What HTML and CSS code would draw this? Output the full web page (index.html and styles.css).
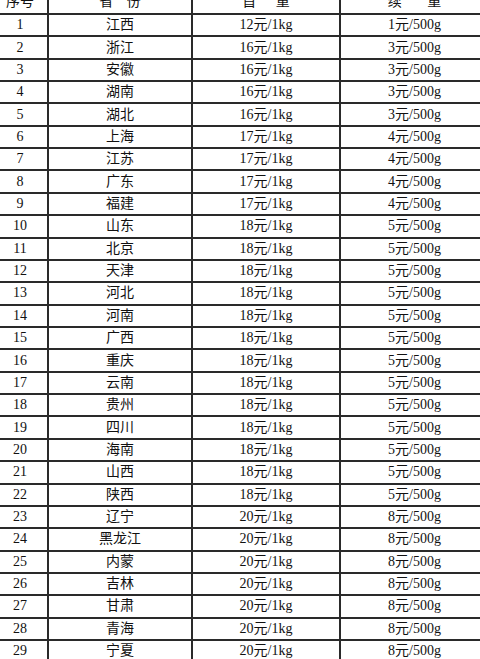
FILE: index.html
```html
<!DOCTYPE html>
<html lang="zh-CN">
<head>
<meta charset="utf-8">
<title>运费表</title>
<link rel="stylesheet" href="styles.css">
</head>
<body>
<table class="rates">
<colgroup><col class="c-no"><col class="c-prov"><col class="c-first"><col class="c-next"></colgroup>
<thead>
<tr><th>序号</th><th class="sp1">省 份</th><th class="sp2">首 重</th><th class="sp3">续 重</th></tr>
</thead>
<tbody>
<tr><td>1</td><td>江西</td><td>12元/1kg</td><td>1元/500g</td></tr>
<tr><td>2</td><td>浙江</td><td>16元/1kg</td><td>3元/500g</td></tr>
<tr><td>3</td><td>安徽</td><td>16元/1kg</td><td>3元/500g</td></tr>
<tr><td>4</td><td>湖南</td><td>16元/1kg</td><td>3元/500g</td></tr>
<tr><td>5</td><td>湖北</td><td>16元/1kg</td><td>3元/500g</td></tr>
<tr><td>6</td><td>上海</td><td>17元/1kg</td><td>4元/500g</td></tr>
<tr><td>7</td><td>江苏</td><td>17元/1kg</td><td>4元/500g</td></tr>
<tr><td>8</td><td>广东</td><td>17元/1kg</td><td>4元/500g</td></tr>
<tr><td>9</td><td>福建</td><td>17元/1kg</td><td>4元/500g</td></tr>
<tr><td>10</td><td>山东</td><td>18元/1kg</td><td>5元/500g</td></tr>
<tr><td>11</td><td>北京</td><td>18元/1kg</td><td>5元/500g</td></tr>
<tr><td>12</td><td>天津</td><td>18元/1kg</td><td>5元/500g</td></tr>
<tr><td>13</td><td>河北</td><td>18元/1kg</td><td>5元/500g</td></tr>
<tr><td>14</td><td>河南</td><td>18元/1kg</td><td>5元/500g</td></tr>
<tr><td>15</td><td>广西</td><td>18元/1kg</td><td>5元/500g</td></tr>
<tr><td>16</td><td>重庆</td><td>18元/1kg</td><td>5元/500g</td></tr>
<tr><td>17</td><td>云南</td><td>18元/1kg</td><td>5元/500g</td></tr>
<tr><td>18</td><td>贵州</td><td>18元/1kg</td><td>5元/500g</td></tr>
<tr><td>19</td><td>四川</td><td>18元/1kg</td><td>5元/500g</td></tr>
<tr><td>20</td><td>海南</td><td>18元/1kg</td><td>5元/500g</td></tr>
<tr><td>21</td><td>山西</td><td>18元/1kg</td><td>5元/500g</td></tr>
<tr><td>22</td><td>陕西</td><td>18元/1kg</td><td>5元/500g</td></tr>
<tr><td>23</td><td>辽宁</td><td>20元/1kg</td><td>8元/500g</td></tr>
<tr><td>24</td><td>黑龙江</td><td>20元/1kg</td><td>8元/500g</td></tr>
<tr><td>25</td><td>内蒙</td><td>20元/1kg</td><td>8元/500g</td></tr>
<tr><td>26</td><td>吉林</td><td>20元/1kg</td><td>8元/500g</td></tr>
<tr><td>27</td><td>甘肃</td><td>20元/1kg</td><td>8元/500g</td></tr>
<tr><td>28</td><td>青海</td><td>20元/1kg</td><td>8元/500g</td></tr>
<tr><td>29</td><td>宁夏</td><td>20元/1kg</td><td>8元/500g</td></tr>
</tbody>
</table>
</body>
</html>
```

FILE: styles.css
```css
html, body {
  margin: 0;
  padding: 0;
  background: #fff;
  overflow: hidden;
}
body {
  width: 480px;
  height: 659px;
}
.rates {
  border-collapse: collapse;
  table-layout: fixed;
  width: 495px;
  margin-left: -7px;
  margin-top: -8.4px;
  font-family: "Liberation Serif", "Noto Sans CJK SC", serif;
  font-size: 14px;
  color: #111;
}
.c-no { width: 55px; }
.c-prov { width: 144px; }
.c-first { width: 148px; }
.c-next { width: 148px; }
.rates tr {
  height: 22.37px;
}
.rates th,
.rates td {
  padding: 0;
  text-align: center;
  vertical-align: middle;
  font-weight: normal;
  line-height: 16px;
  border: 2px solid #2a2a2a;
  border-left-color: #2a2a2a;
}
.rates th:first-child,
.rates td:first-child { border-left: none; }
.rates th:last-child,
.rates td:last-child { border-right: none; }
.rates thead th { border-top: none; }
.sp1 { word-spacing: 10px; }
.sp2 { word-spacing: 16px; }
.sp3 { word-spacing: 22px; }
```
